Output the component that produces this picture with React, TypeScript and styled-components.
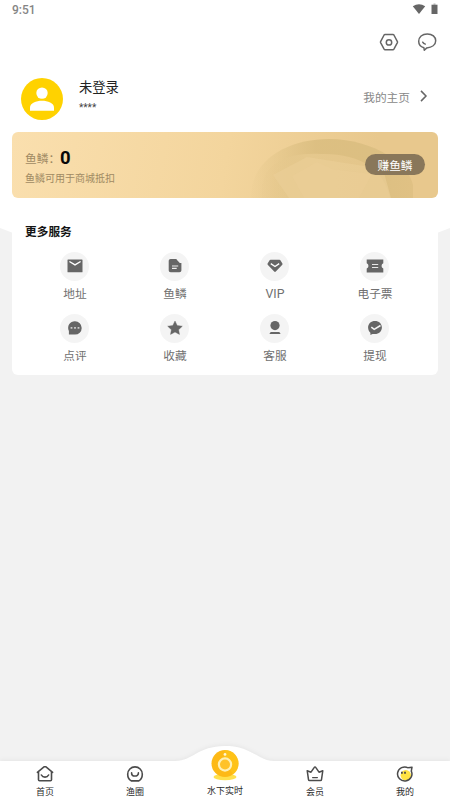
import React from "react";
import styled, { createGlobalStyle } from "styled-components";

const GlobalStyle = createGlobalStyle`
  * { box-sizing: border-box; }
  body {
    margin: 0;
    font-family: Roboto, "Noto Sans CJK SC", sans-serif;
    color: #222;
  }
`;

const Page = styled.div`
  position: relative;
  display: flex;
  flex-direction: column;
  width: 450px;
  height: 800px;
  overflow: hidden;
  background: #f2f2f2;
`;

const Backdrop = styled.svg`
  position: absolute;
  top: 0;
  left: 0;
`;

const StatusBar = styled.header`
  position: relative;
  display: flex;
  justify-content: space-between;
  height: 20px;
  padding: 0 12px;
  font-size: 12px;
  font-weight: 500;
  line-height: 20px;
  color: #858585;
`;

const StatusIcons = styled.svg`
  display: block;
  margin-top: 3px;
`;

const Toolbar = styled.div`
  position: relative;
  display: flex;
  justify-content: flex-end;
  gap: 18px;
  height: 45px;
  padding: 12px 13px 0 0;
`;

const Profile = styled.section`
  position: relative;
  display: flex;
  align-items: flex-start;
  height: 67px;
  padding: 12px 21px 0;
`;

const Avatar = styled.svg`
  display: block;
  margin-top: 0.5px;
`;

const Identity = styled.div`
  display: flex;
  flex-direction: column;
  flex: 1;
  padding: 0 0 0 16px;
`;

const UserName = styled.div`
  padding-top: 1px;
  font-size: 13.3px;
  line-height: 20px;
`;

const UserNumber = styled.div`
  font-size: 10px;
  line-height: 20px;
  color: #444;
`;

const HomeLink = styled.a`
  display: flex;
  align-items: center;
  gap: 9px;
  height: 20px;
  margin-top: 9px;
  font-size: 11.7px;
  color: #888;
`;

const PointsCard = styled.section`
  position: relative;
  display: flex;
  align-items: center;
  justify-content: space-between;
  height: 66px;
  margin: 0 12px;
  padding: 0 13px;
  border-radius: 6px;
  overflow: hidden;
  background: linear-gradient(100deg, #fadfae 0%, #f3d59d 50%, #e8c88d 84%, #e8c88d 100%);
`;

const Coin = styled.svg`
  position: absolute;
  right: 0;
  top: 0;
`;

const PointsText = styled.div`
  position: relative;
  padding-top: 4px;
  color: #a08a63;
`;

const PointsRow = styled.div`
  display: flex;
  align-items: center;
  height: 22px;
  font-size: 11.7px;
`;

const PointsValue = styled.strong`
  font-size: 18.5px;
  font-weight: 700;
  color: #080808;
`;

const PointsNote = styled.div`
  font-size: 10px;
  line-height: 19px;
`;

const EarnButton = styled.button`
  position: relative;
  width: 60px;
  height: 21px;
  margin-top: -1px;
  padding: 2px 0 0;
  border: 0;
  border-radius: 11px;
  background: #89775a;
  color: #fff;
  font: 11.7px/20px Roboto, "Noto Sans CJK SC", sans-serif;
`;

const Services = styled.section`
  position: relative;
  height: 161px;
  margin: 16px 12px 0;
  padding: 8px 13px 0;
  border-radius: 6px;
  background: #fff;
`;

const SectionTitle = styled.h2`
  margin: 0 0 9.5px;
  font-size: 11.7px;
  line-height: 20px;
  font-weight: 700;
  color: #151515;
`;

const ServiceGrid = styled.div`
  display: grid;
  grid-template-columns: repeat(4, 100px);
  grid-auto-rows: 62px;
`;

const Service = styled.div`
  display: flex;
  flex-direction: column;
  align-items: center;
  font-size: 11.7px;
  line-height: 20px;
  color: #707070;
`;

const ServiceLabel = styled.span<{ $latin?: boolean }>`
  font-size: ${(p) => (p.$latin ? "12.3px" : "11.7px")};
`;

const ServiceIcon = styled.div`
  display: grid;
  place-items: center;
  width: 29px;
  height: 29px;
  margin: 0 1px 3px 0;
  border-radius: 50%;
  background: #f4f4f4;
`;

const TabBar = styled.nav`
  position: relative;
  display: grid;
  grid-template-columns: repeat(5, 90px);
  height: 58px;
  margin-top: auto;
`;

const TabShape = styled.svg`
  position: absolute;
  left: 0;
  bottom: 0;
  filter: drop-shadow(0 -1px 2px rgba(0, 0, 0, 0.05));
`;

const Tab = styled.div<{ $raised?: boolean }>`
  position: relative;
  display: flex;
  flex-direction: column;
  align-items: center;
  gap: 3px;
  padding-top: ${(p) => (p.$raised ? "8px" : "24px")};
  font-size: 9px;
  line-height: 14px;
  color: #2b2b2b;
`;

const ink = "#666";

const services = [
  {
    label: "地址",
    art: (
      <>
        <rect x="1.5" y="2.5" width="15" height="12.7" rx=".5" fill={ink} />
        <path d="m3.4 4.5 5.6 3.4 5.6-3.4" fill="none" stroke="#fff" strokeWidth="1.4" />
      </>
    ),
  },
  {
    label: "鱼鳞",
    art: (
      <>
        <path d="M4.7 2h5.7v3c0 .7.4 1.1 1.1 1.1h3.9v7.2c0 1.2-.8 2-2 2H4.7c-1.2 0-2-.8-2-2V4c0-1.200.8-2 2-2Z" fill={ink} />
        <path d="M10 2.100 14.300 6.400H10Z" fill={ink} />
        <path d="M6 9h6.200M6 11.400h4.700" stroke="#eee" strokeWidth="1.2" />
      </>
    ),
  },
  {
    label: "VIP",
    latin: true,
    art: (
      <>
        <path d="M4.5 2.8h9c.4 0 .7.2.9.5l2 3.3c.2.4.2.8-.1 1.1l-6.5 6.9c-.5.5-1.1.5-1.6 0L1.7 7.7c-.3-.3-.3-.7-.1-1.1l2-3.3c.2-.3.5-.5.9-.5Z" fill={ink} />
        <path d="m4.800 6.700 4.200 2.800 4.200-2.800" fill="none" stroke="#fff" strokeWidth="1.4" />
      </>
    ),
  },
  {
    label: "电子票",
    art: (
      <>
        <path d="M.7 2.500h16.600v3.800a2.800 2.800 0 0 0 0 5.200v4H.7v-4a2.800 2.800 0 0 0 0-5.200Z" fill={ink} />
        <path d="M6 7.500h6.200M6 10.500h6.200" stroke="#e8e8e8" strokeWidth="1.2" />
      </>
    ),
  },
  {
    label: "点评",
    art: (
      <>
        <path d="M9 2.200a6.700 6.700 0 1 1 0 13.400H2.900v-3.600A6.700 6.700 0 0 1 9 2.200Z" fill={ink} />
        <path d="M4.600 8h1.800v1.800H4.600ZM8.100 8h1.800v1.800H8.100ZM11.600 8h1.800v1.800h-1.800Z" fill="#ccc" />
      </>
    ),
  },
  {
    label: "收藏",
    art: <path d="m9 2 2.200 4.500 5.100.7-3.700 3.600.9 4.600L9 13.100l-4.500 2.300.9-4.600-3.700-3.600 5.100-.7Z" fill={ink} stroke={ink} strokeWidth=".4" strokeLinejoin="round" />,
  },
  {
    label: "客服",
    art: (
      <>
        <circle cx="9" cy="6.600" r="4.600" fill={ink} />
        <path d="M5 12.900h8c.5 0 1.500 1.500 1.500 2.100h-11c0-.6 1-2.100 1.500-2.100Z" fill={ink} />
      </>
    ),
  },
  {
    label: "提现",
    art: (
      <>
        <path d="M9 2.100c3.900 0 6.900 2.700 6.900 6.500 0 3.800-3 6.500-6.900 6.500H6.500l-2.100.8v-2.200C3 12.600 2.100 10.800 2.100 8.600 2.100 4.800 5.100 2.100 9 2.100Z" fill={ink} />
        <path d="m5.300 8.200 2.900 2.200 6.300-3.900" fill="none" stroke="#f4f4f4" strokeWidth="1.6" />
      </>
    ),
  },
];

const HomeIcon = () => (
  <svg width="18" height="16" viewBox="0 0 18 16" fill="none" stroke="#4b4b4b" strokeWidth="1.6" strokeLinejoin="round" strokeLinecap="round">
    <path d="M1.400 6.300 8 .9c.6-.4 1.400-.4 2 0l6.600 5.400M2.500 5.800v7.900c0 .6.400 1 1 1h11c.6 0 1-.4 1-1V5.800M5.400 9c1.500 2.900 5.700 2.900 7.200 0" />
  </svg>
);

const CircleIcon = () => (
  <svg width="18" height="16" viewBox="0 0 18 16" fill="none" stroke="#4b4b4b" strokeWidth="1.6" strokeLinecap="round">
    <path d="M5.300 14.900h7.500c2.100-1.300 3.500-3.900 3.500-6.700a7.300 7.300 0 0 0-14.600 0c0 2.900 1.400 5.400 3.600 6.700ZM5.600 6.900c0 4.200 6.800 4.200 6.800 0" />
  </svg>
);

const DeviceIcon = () => (
  <svg width="30" height="31" viewBox="0 0 30 31">
    <ellipse cx="15" cy="27" rx="11.5" ry="3.2" fill="#ffe04d" />
    <circle cx="15" cy="13.5" r="13.5" fill="#fdb916" />
    <path d="M15 0a13.500 13.500 0 0 1 8 24.400L13.500 8Z" fill="#ffc81a" opacity=".6" />
    <circle cx="15" cy="14.5" r="6.1" fill="#ffc229" stroke="#fff0b5" strokeWidth="2.2" />
    <circle cx="15" cy="4.4" r="1.4" fill="#fff7d7" />
  </svg>
);

const CrownIcon = () => (
  <svg width="18" height="16" viewBox="0 0 18 16" fill="none" stroke="#4b4b4b" strokeWidth="1.5" strokeLinejoin="round" strokeLinecap="round">
    <path d="M1.200 4.700 5 6.200 8.300 1.400c.3-.5 1.100-.5 1.400 0L13 6.200l3.800-1.500-1.300 8.900c-.1.700-.5 1-1.100 1H3.600c-.6 0-1-.3-1.100-1Z" />
    <path d="M6.600 11.600h4.800" strokeWidth="1.2" />
  </svg>
);

const MineIcon = () => (
  <svg width="18" height="16" viewBox="0 0 18 16">
    <circle cx="9.800" cy="9.200" r="5.200" fill="#ffe343" />
    <path d="M12.100 1.800A7.200 7 0 1 0 15.300 5.100l.7-3.900-3.900.6" fill="none" stroke="#4b4b4b" strokeWidth="1.5" strokeLinejoin="round" />
    <path d="M5 5.800h1.800v2H5ZM8.100 5.800h1.800v2H8.100Z" fill="#4b4b4b" />
  </svg>
);

const tabs = [
  { label: "首页", Icon: HomeIcon },
  { label: "渔圈", Icon: CircleIcon },
  { label: "水下实时", Icon: DeviceIcon, raised: true },
  { label: "会员", Icon: CrownIcon },
  { label: "我的", Icon: MineIcon },
];

export default function App() {
  return (
    <>
      <GlobalStyle />
      <Page>
        <Backdrop width="450" height="280" viewBox="0 0 450 280">
          <path d="M0 0h450v228Q225 318 0 228Z" fill="#fff" />
        </Backdrop>
        <StatusBar>
          <span>9:51</span>
          <StatusIcons width="26" height="13" viewBox="0 0 26 13" fill="#666">
            <path d="M.8 3.300Q7 -.9 13.200 3.300L7 11Z" />
            <path d="M19.500 1.700h6V11h-6Z" />
            <path d="M21.500.5h2v1.200h-2Z" opacity=".5" />
          </StatusIcons>
        </StatusBar>
        <Toolbar>
          <svg width="20" height="20" viewBox="0 0 20 20" fill="none" stroke="#666" strokeWidth="1.5" strokeLinejoin="round">
            <path d="M6 2.500h8c.4 0 .7.200.9.500l3.500 6.700c.2.400.2.600 0 1l-3.500 6.500c-.2.300-.5.500-.9.500H6c-.4 0-.7-.2-.9-.5l-3.500-6.500c-.2-.4-.2-.6 0-1L5.100 3c.2-.3.500-.5.900-.5Z" />
            <circle cx="10" cy="10.400" r="2.700" />
          </svg>
          <svg width="20" height="20" viewBox="0 0 20 20" fill="none" stroke="#666" strokeWidth="1.5" strokeLinejoin="round" strokeLinecap="round">
            <path d="M6.900 15.800C3.600 14.800 1.700 12.600 1.700 9.300 1.700 5 5.200 1.900 10.300 1.900s8.400 2.900 8.400 6.800c0 4.300-4 6.800-8.900 7.200L7.300 18.200Z" />
            <path d="M5.700 10.200c.6 1 1.500 1.600 2.600 1.900" />
          </svg>
        </Toolbar>
        <Profile>
          <Avatar width="42" height="42" viewBox="0 0 42 42">
            <circle cx="21" cy="21" r="21" fill="#ffd200" />
            <circle cx="21" cy="15.100" r="5.700" fill="#fff" />
            <path d="M9 32.800v-3.200c0-4.600 6.200-6.800 12-6.800s12 2.200 12 6.800v3.200Z" fill="#fff" />
          </Avatar>
          <Identity>
            <UserName>未登录</UserName>
            <UserNumber>****</UserNumber>
          </Identity>
          <HomeLink>
            我的主页
            <svg width="10" height="12" viewBox="0 0 10 12" fill="none" stroke="#666" strokeWidth="1.5">
              <path d="m2 .9 5 5.100-5 5.100" />
            </svg>
          </HomeLink>
        </Profile>
        <PointsCard>
          <Coin width="195" height="66" viewBox="0 0 195 66">
            <defs>
              <linearGradient id="rim" x1="0" x2="1">
                <stop offset="0" stopColor="#ddc184" stopOpacity=".05" />
                <stop offset=".4" stopColor="#dabd7f" stopOpacity=".85" />
                <stop offset=".75" stopColor="#dcbf82" />
                <stop offset="1" stopColor="#e0c184" />
              </linearGradient>
              <linearGradient id="face" x1="0" x2="1">
                <stop offset="0" stopColor="#e6c98e" stopOpacity=".1" />
                <stop offset=".35" stopColor="#e5c88d" />
                <stop offset="1" stopColor="#e4c58a" />
              </linearGradient>
            </defs>
            <path d="M8 66C7 28 45 7 86 7c46 0 80 26 84 46v13Z" fill="url(#rim)" />
            <path d="M19 66C15 31 45 20 78 22c38-1 63 15 69 44Z" fill="url(#face)" />
            <path d="m30 43 34-18 76 12 8 29H46Z" fill="#ebce98" opacity=".6" />
            <path d="m49 44 25-14 15 7 40 5-13 24H61Z" fill="#efd19d" opacity=".25" />
          </Coin>
          <PointsText>
            <PointsRow>鱼鳞：<PointsValue>0</PointsValue></PointsRow>
            <PointsNote>鱼鳞可用于商城抵扣</PointsNote>
          </PointsText>
          <EarnButton>赚鱼鳞</EarnButton>
        </PointsCard>
        <Services>
          <SectionTitle>更多服务</SectionTitle>
          <ServiceGrid>
            {services.map(({ label, art, latin }) => (
              <Service key={label}>
                <ServiceIcon>
                  <svg width="18" height="18" viewBox="0 0 18 18">{art}</svg>
                </ServiceIcon>
                <ServiceLabel $latin={latin}>{label}</ServiceLabel>
              </Service>
            ))}
          </ServiceGrid>
        </Services>
        <TabBar>
          <TabShape width="450" height="62" viewBox="0 0 450 62">
            <path d="M0 23H176C192 23 198 8 225 8S258 23 274 23H450V62H0Z" fill="#fff" />
          </TabShape>
          {tabs.map(({ label, Icon, raised }) => (
            <Tab key={label} $raised={raised}>
              <Icon />
              {label}
            </Tab>
          ))}
        </TabBar>
      </Page>
    </>
  );
}
